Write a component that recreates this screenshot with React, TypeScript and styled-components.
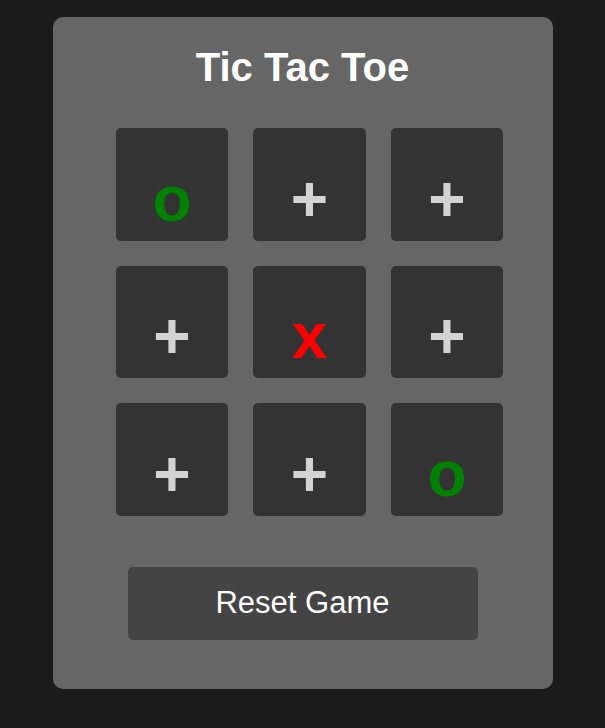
import React from "react";
import styled, { createGlobalStyle } from "styled-components";

const GlobalStyle = createGlobalStyle`
  html, body {
    margin: 0;
    padding: 0;
    background: #1b1b1b;
    font-family: "Liberation Sans", Arial, sans-serif;
  }
  * { box-sizing: border-box; }
`;

const Page = styled.div`
  display: flex;
  justify-content: center;
  padding-top: 17px;
  min-height: 728px;
`;

const Card = styled.div`
  width: 500px;
  height: 672px;
  background: #666666;
  border-radius: 10px;
  padding-top: 27px;
  display: flex;
  flex-direction: column;
  align-items: center;
`;

const Title = styled.h1`
  margin: 0;
  font-size: 40px;
  font-weight: bold;
  color: #ffffff;
  line-height: 46px;
`;

const Board = styled.div`
  margin-top: 38px;
  margin-left: 14px;
  display: grid;
  grid-template-columns: repeat(3, 112.5px);
  grid-auto-rows: 112.5px;
  gap: 25px;
`;

const Cell = styled.div<{ $mark: string }>`
  background: #333333;
  border-radius: 5px;
  display: flex;
  align-items: center;
  justify-content: center;
  padding-top: 29px;
  font-size: 64px;
  font-weight: bold;
  line-height: normal;
  color: ${(p) =>
    p.$mark === "o" ? "#008000" : p.$mark === "x" ? "#ff0000" : "#d3d3d3"};
`;

const ResetButton = styled.button`
  margin-top: 51px;
  width: 350px;
  height: 73px;
  background: #444444;
  border: none;
  border-radius: 5px;
  color: #ffffff;
  font-family: "Liberation Sans", Arial, sans-serif;
  font-size: 31px;
  cursor: pointer;
`;

const board = ["o", "+", "+", "+", "x", "+", "+", "+", "o"];

export default function App() {
  return (
    <>
      <GlobalStyle />
      <Page>
        <Card>
          <Title>Tic Tac Toe</Title>
          <Board>
            {board.map((m, i) => (
              <Cell key={i} $mark={m}>
                {m}
              </Cell>
            ))}
          </Board>
          <ResetButton>Reset Game</ResetButton>
        </Card>
      </Page>
    </>
  );
}
